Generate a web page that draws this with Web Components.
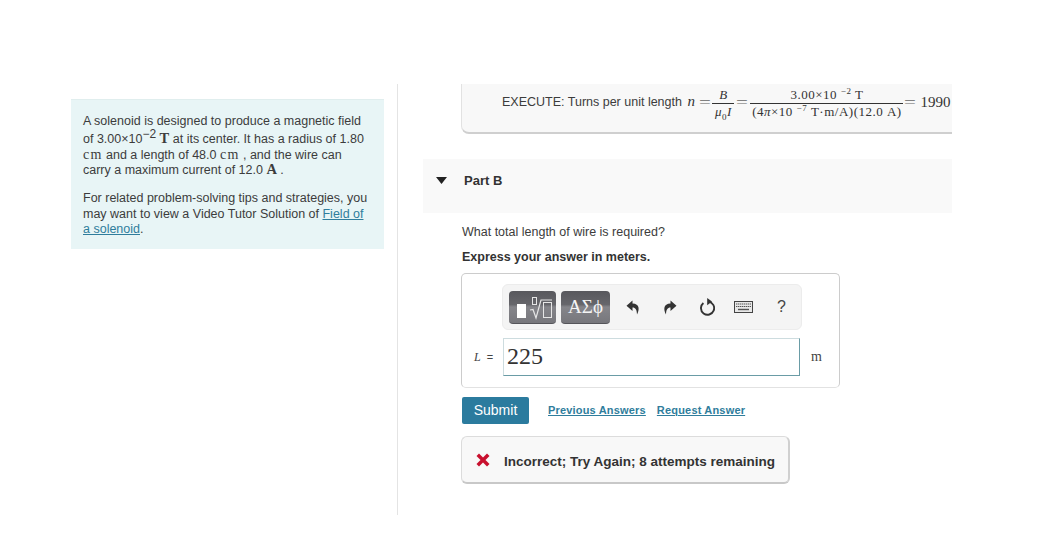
<!DOCTYPE html>
<html>
<head>
<meta charset="utf-8">
<title>Part B</title>
<style>
    html, body { margin: 0; background: #fff; }
    body { font-family: "Liberation Sans", Arial, sans-serif; color: #333; }
    .u { font-family: "Liberation Serif", serif; font-size: 14px; letter-spacing: 1.2px; line-height: 12px; }
    b.u { font-size: 14.5px; letter-spacing: 0; }
</style>
</head>
<body>
<quiz-page>
    <problem-panel slot="side">
        <p>A solenoid is designed to produce a magnetic field of 3.00×10<sup>−2</sup> <b class="u">T</b> at its center. It has a radius of 1.80 <span class="u">cm</span> and a length of 48.0 <span class="u">cm</span> , and the wire can carry a maximum current of 12.0 <b class="u">A</b> .</p>
        <p>For related problem-solving tips and strategies, you may want to view a Video Tutor Solution of <a>Field of a solenoid</a>.</p>
    </problem-panel>
    <explain-box></explain-box>
    <part-header>Part B</part-header>
    <part-question></part-question>
    <answer-box></answer-box>
    <submit-row></submit-row>
    <feedback-box>Incorrect; Try Again; 8 attempts remaining</feedback-box>
</quiz-page>

<script>
class QuizPage extends HTMLElement {
    constructor() {
        super();
        this.attachShadow({ mode: 'open' }).innerHTML = `
            <style>
                :host { display: grid; grid-template-columns: 398px 554px; height: 552px; padding-top: 84px; box-sizing: border-box; }
                .side { border-right: 1px solid #e4e4e4; height: 431px; padding: 15px 13px 0 71px; box-sizing: border-box; }
                .main { padding-left: 25px; }
            </style>
            <div class="side"><slot name="side"></slot></div>
            <div class="main"><slot></slot></div>
        `;
    }
}

class ProblemPanel extends HTMLElement {
    constructor() {
        super();
        this.attachShadow({ mode: 'open' }).innerHTML = `
            <style>
                :host { display: block; background: #e8f5f6; border-top: 1px solid #e0eeee; padding: 14px 12px 12px 12px; height: 150px; box-sizing: border-box; font-size: 12.5px; line-height: 15.4px; color: #3c3c3c; }
                ::slotted(p) { margin: 0 0 12.5px; }
            </style>
            <slot></slot>
        `;
    }
    connectedCallback() {
        // sup and link live in the light DOM, styled here since ::slotted cannot reach them
        this.querySelectorAll('sup').forEach(s => { s.style.cssText = 'font-size:12px;line-height:10px;vertical-align:5px'; });
        this.querySelectorAll('a').forEach(a => { a.style.cssText = 'color:#2f7d9c;text-decoration:underline'; });
    }
}

class ExplainBox extends HTMLElement {
    constructor() {
        super();
        this.attachShadow({ mode: 'open' }).innerHTML = `
            <style>
                :host { display: block; margin-left: 38px; height: 50px; box-sizing: border-box; background: #f8f8f8; border-left: 1px solid #e2e2e2; border-bottom: 2px solid #cfcfcf; border-radius: 0 0 0 8px; padding: 4px 0 0 40px; white-space: nowrap; overflow: hidden; }
                .row { display: flex; align-items: flex-start; font-size: 12.5px; color: #3c3c3c; }
                .lead { padding-top: 5px; }
                .m { font-family: "Liberation Serif", serif; color: #333; }
                .n { font-size: 15px; margin-left: 2px; letter-spacing: .5px; }
                i { font-style: italic; }
                .eq { display: block; width: 12px; text-align: center; transform: scaleX(1.4); padding-top: 6px; font-size: 15px; line-height: 16px; color: #666; }
                .frac { display: flex; flex-direction: column; align-items: center; line-height: 14px; font-size: 13px; letter-spacing: .5px; }
                .frac > span:first-child { border-bottom: 1px solid #333; padding: 0 0 1px; align-self: stretch; text-align: center; }
                .frac > span:last-child { padding: 1px 1px 0; }
                sub, sup { font-size: 9px; line-height: 0; }
                .end { padding: 6px 0 0 4px; font-size: 15px; line-height: 16px; }
            </style>
            <div class="row">
                <span class="lead">EXECUTE: Turns per unit length <span class="m n"><i>n</i></span></span>
                <span class="m eq" style="margin:0 1px 0 4px">=</span>
                <span class="m frac" style="width:22px"><span><i>B</i></span><span><i>μ</i><sub>0</sub><i>I</i></span></span>
                <span class="m eq" style="margin:0 2px">=</span>
                <span class="m frac" style="width:153px"><span>3.00×10 <sup>−2</sup> T</span><span>(4<i>π</i>×10 <sup>−7</sup> T·m/A)(12.0 A)</span></span>
                <span class="m eq" style="margin-left:1px">=</span>
                <span class="m end">1990</span>
            </div>
        `;
    }
}

class PartHeader extends HTMLElement {
    constructor() {
        super();
        this.attachShadow({ mode: 'open' }).innerHTML = `
            <style>
                :host { display: flex; align-items: flex-start; height: 54px; margin-top: 25px; background: #f9f9f9; padding: 14px 0 0 13px; box-sizing: border-box; font-size: 13px; font-weight: bold; line-height: 15px; color: #333; }
                svg { margin: 4px 17px 0 0; }
            </style>
            <svg width="11" height="7" viewBox="0 0 11 7"><path d="M0 0H11L5.5 7Z" fill="#222"/></svg>
            <slot></slot>
        `;
    }
}

class PartQuestion extends HTMLElement {
    constructor() {
        super();
        this.attachShadow({ mode: 'open' }).innerHTML = `
            <style>
                :host { display: block; margin: 11px 0 0 39px; font-size: 12.5px; line-height: 16px; color: #3c3c3c; }
                p { margin: 0; }
                b { display: block; margin-top: 9px; color: #333; }
            </style>
            <p>What total length of wire is required?</p>
            <b>Express your answer in meters.</b>
        `;
    }
}

class MathToolbar extends HTMLElement {
    constructor() {
        super();
        this.attachShadow({ mode: 'open' }).innerHTML = `
            <style>
                :host { display: flex; align-items: center; width: 300px; height: 46px; box-sizing: border-box; margin-left: 40px; padding-left: 6px; background: #f4f4f4; border: 1px solid #ececec; border-radius: 6px; }
                .tpl { display: flex; align-items: center; justify-content: center; height: 33px; border-radius: 4px; background: linear-gradient(#58585d 0, #66666b 42%, #85858a 50%, #77777c 100%); box-sizing: border-box; border-bottom: 1px solid #55555a; color: #f4f4f4; }
                .a { width: 47px; }
                .a svg { display: block; }
                .b { width: 49px; margin-left: 5px; font: 19px "Liberation Serif", serif; }
                .tools { display: flex; align-items: center; margin-left: 16px; }
                .tools svg { display: block; }
                .q { font-size: 16px; color: #444; margin-left: 24px; }
            </style>
            <div class="tpl a">
                <svg width="47" height="32" viewBox="0 0 47 32" fill="none" stroke="#e6e6e6">
                    <rect x="8" y="13" width="9" height="14" fill="#fff" stroke="none"/>
                    <rect x="23.5" y="6.5" width="4" height="7" stroke-width="1"/>
                    <path d="M21 19l3-.5 3 8.5 5-18h11" stroke-width="1.2"/>
                    <rect x="34.5" y="11.5" width="8" height="15" stroke-width="1"/>
                </svg>
            </div>
            <div class="tpl b">ΑΣϕ</div>
            <div class="tools">
                <svg width="14" height="15" viewBox="0 0 14 15"><path d="M6.5 0.5L0.5 5.8 6.5 11V7.6C9.5 7.6 10.8 9.7 11 14.5 13.6 10 13.8 3.8 6.5 3.6Z" fill="#333"/></svg>
                <svg style="margin-left:23px" width="14" height="15" viewBox="0 0 14 15"><path d="M7.5 0.5L13.5 5.8 7.5 11V7.6C4.5 7.6 3.2 9.7 3 14.5 .4 10 .2 3.8 7.5 3.6Z" fill="#333"/></svg>
                <svg style="margin-left:22px" width="16" height="18" viewBox="0 0 16 18"><path d="M4.4 5A6.6 6.6 0 1 0 9.5 3.6" fill="none" stroke="#333" stroke-width="1.9"/><path d="M8.2 0V7.2L13 3.6Z" fill="#333"/></svg>
                <svg style="margin-left:19px" width="19" height="12" viewBox="0 0 19 12"><rect x=".5" y=".5" width="18" height="11" fill="#e8e8e8" stroke="#444"/><path d="M2 3h15M2 5.5h15" stroke="#555" stroke-width="1.2" stroke-dasharray="1.4 .6"/><path d="M4 8.5h11" stroke="#555" stroke-width="1.4"/></svg>
                <span class="q">?</span>
            </div>
        `;
    }
}

class AnswerBox extends HTMLElement {
    constructor() {
        super();
        this.attachShadow({ mode: 'open' }).innerHTML = `
            <style>
                :host { display: block; width: 379px; height: 115px; margin: 8px 0 0 38px; box-sizing: border-box; border: 1px solid #ccc; border-bottom-color: #e2e2e2; border-radius: 5px; padding-top: 10px; background: #fff; }
                .row { display: flex; align-items: center; margin-top: 8px; }
                .label { width: 41px; box-sizing: border-box; padding-left: 12px; font: 11px "Liberation Sans", sans-serif; color: #444; white-space: pre; }
                .label i { font: italic 12px "Liberation Serif", serif; margin-right: 3px; }
                .input { width: 297px; height: 38px; box-sizing: border-box; border: 1px solid #cddcdf; border-right-color: #6a9ca6; border-bottom-color: #6a9ca6; padding-left: 3px; font: 24px/34px "Liberation Serif", serif; color: #333; }
                .unit { margin-left: 11px; font: 14px "Liberation Serif", serif; color: #444; }
            </style>
            <math-toolbar></math-toolbar>
            <div class="row">
                <span class="label"><i>L</i> =</span>
                <div class="input">225</div>
                <span class="unit">m</span>
            </div>
        `;
    }
}

class SubmitRow extends HTMLElement {
    constructor() {
        super();
        this.attachShadow({ mode: 'open' }).innerHTML = `
            <style>
                :host { display: flex; align-items: center; margin: 9px 0 0 39px; height: 27px; }
                .btn { width: 67px; height: 27px; line-height: 27px; text-align: center; background: #2b7b9e; color: #fff; font-size: 14px; border-radius: 2px; }
                a { font-size: 11px; font-weight: bold; letter-spacing: .18px; color: #2f7d9c; text-decoration: underline; padding-bottom: 2px; }
                .p { margin-left: 19px; }
                .r { margin-left: 11px; }
            </style>
            <span class="btn">Submit</span>
            <a class="p">Previous Answers</a>
            <a class="r">Request Answer</a>
        `;
    }
}

class FeedbackBox extends HTMLElement {
    constructor() {
        super();
        this.attachShadow({ mode: 'open' }).innerHTML = `
            <style>
                :host { display: flex; align-items: center; width: 329px; height: 48px; margin: 12px 0 0 38px; box-sizing: border-box; background: #f8f8f8; border: 1px solid #dcdcdc; border-bottom: 2px solid #c8c8c8; border-right: 2px solid #d0d0d0; border-radius: 6px; padding-left: 14px; font-size: 13.5px; font-weight: bold; color: #333; }
                svg { margin-right: 14px; }
                slot { display: block; padding-top: 4px; }
            </style>
            <svg width="14" height="14" viewBox="0 0 14 14"><path d="M3 0.5L7 4.5 11 0.5 13.5 3 9.5 7 13.5 11 11 13.5 7 9.5 3 13.5 0.5 11 4.5 7 0.5 3Z" fill="#c8102e"/></svg>
            <slot></slot>
        `;
    }
}

customElements.define('quiz-page', QuizPage);
customElements.define('problem-panel', ProblemPanel);
customElements.define('explain-box', ExplainBox);
customElements.define('part-header', PartHeader);
customElements.define('part-question', PartQuestion);
customElements.define('math-toolbar', MathToolbar);
customElements.define('answer-box', AnswerBox);
customElements.define('submit-row', SubmitRow);
customElements.define('feedback-box', FeedbackBox);
</script>
</body>
</html>
